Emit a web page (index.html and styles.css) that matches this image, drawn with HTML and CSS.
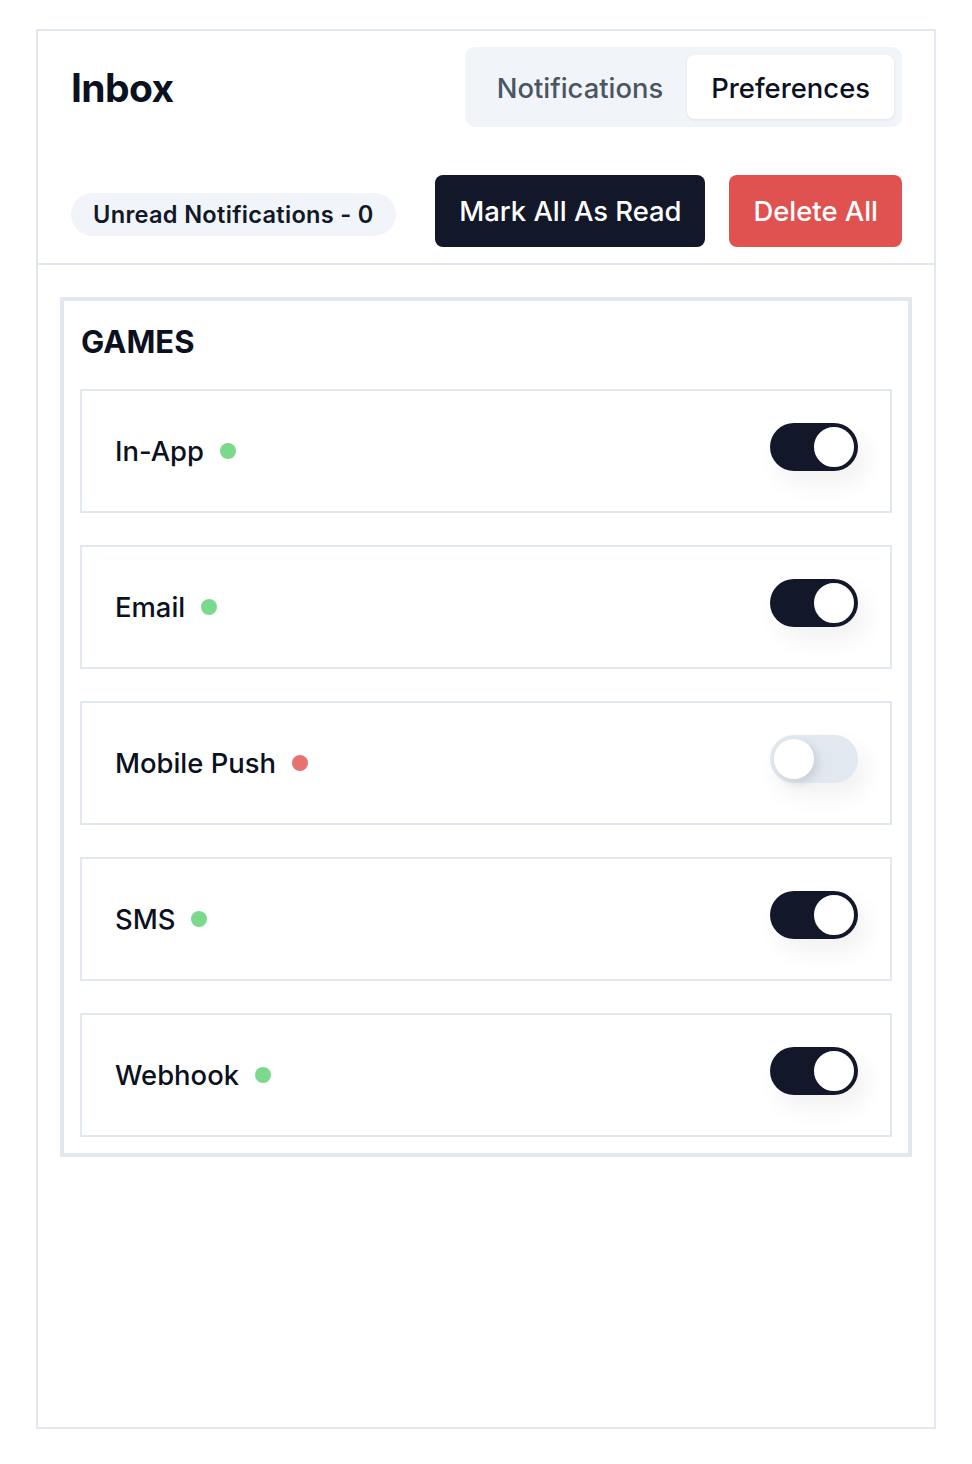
FILE: index.html
```html
<!DOCTYPE html>
<html>
<head>
    <meta charset="utf-8">
    <title>Inbox</title>
    <link rel="stylesheet" href="styles.css">
</head>
<body>
    <div class="inbox">
        <div class="inboxhead">
            <div class="headrow">
                <h1 class="title">Inbox</h1>
                <div class="tabs">
                    <span class="tab">Notifications</span>
                    <span class="tab active">Preferences</span>
                </div>
            </div>
            <div class="headrow actions">
                <span class="unread">Unread Notifications - 0</span>
                <div class="buttons">
                    <button class="btn dark">Mark All As Read</button>
                    <button class="btn red">Delete All</button>
                </div>
            </div>
        </div>

        <!-- preferences -->
        <div class="group">
            <h2 class="grouptitle">GAMES</h2>
            <div class="channel">
                <span class="name">In-App <i class="dot on"></i></span>
                <span class="toggle on"><b></b></span>
            </div>
            <div class="channel">
                <span class="name">Email <i class="dot on"></i></span>
                <span class="toggle on"><b></b></span>
            </div>
            <div class="channel">
                <span class="name">Mobile Push <i class="dot off"></i></span>
                <span class="toggle"><b></b></span>
            </div>
            <div class="channel">
                <span class="name">SMS <i class="dot on"></i></span>
                <span class="toggle on"><b></b></span>
            </div>
            <div class="channel">
                <span class="name">Webhook <i class="dot on"></i></span>
                <span class="toggle on"><b></b></span>
            </div>
        </div>
    </div>
</body>
</html>
```

FILE: styles.css
```css
body { margin:0; padding:29px 36px 35px; background:#fff; font-family:Inter, "Noto Sans", sans-serif; color:#0f172a; }

.inbox { height:1396px; border:2px solid #e2e8f0; }
.inboxhead { padding:16px 32px 16px 33px; border-bottom:2px solid #e2e8f0; }
.headrow { display:flex; align-items:center; justify-content:space-between; }
.actions { margin-top:48px; }

.title { margin:0; font-size:39px; font-weight:700; letter-spacing:-0.6px; color:#0b1120; }

.tabs { display:flex; padding:8px; background:#f1f5f9; border-radius:10px; }
.tab { padding:2px 24px 0; height:62px; line-height:62px; font-size:27.4px; font-weight:500; color:#4b5563; border-radius:8px; }
.tab.active { background:#fff; color:#0b1120; box-shadow:0 1px 3px rgba(15,23,42,0.08); }

.unread { margin-top:6px; padding:0 22px; height:43px; line-height:43px; background:#f1f5f9; border-radius:22px; font-size:23.6px; font-weight:600; color:#111827; letter-spacing:0.3px; }
.buttons { display:flex; gap:24px; }
.btn { height:72px; padding:0 24px; border:0; border-radius:8px; font-family:inherit; font-size:27.4px; font-weight:500; color:#fff; }
.btn.dark { background:#121829; }
.btn.red { background:#e0524f; }

.group { margin:32px 22px 0; padding:16px 16px 16px; border:4px solid #e2e8f0; }
.grouptitle { margin:6px 0 28px 1px; font-size:31px; font-weight:700; color:#0b1120; line-height:38px; }

.channel { display:flex; align-items:center; justify-content:space-between; height:120px; padding:0 32px 0 33px; border:2px solid #e2e8f0; }
.channel + .channel { margin-top:32px; }
.name { display:flex; align-items:center; gap:16px; font-size:27.4px; font-weight:500; color:#0b1120; }
.dot { display:block; width:16px; height:16px; border-radius:50%; }
.dot.on { background:#7ad98a; }
.dot.off { background:#e87272; }

.toggle { display:flex; width:88px; height:48px; margin-bottom:8px; box-sizing:border-box; border-radius:24px; padding:4px; background:#e2e8f0; box-shadow:8px 12px 24px rgba(15,23,42,0.06); }
.toggle b { width:40px; height:40px; box-sizing:border-box; border-radius:50%; background:#fff; }
.toggle.on { background:#121829; justify-content:flex-end; padding:2px; }
.toggle.on b { width:44px; height:44px; border:2px solid #121829; }
.toggle:not(.on) b { box-shadow:4px 4px 10px rgba(15,23,42,0.12); }
```
